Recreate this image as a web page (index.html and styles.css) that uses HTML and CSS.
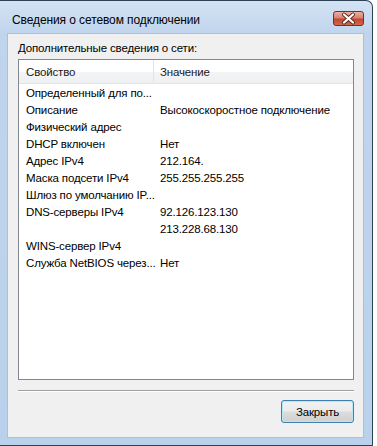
FILE: index.html
```html
<!DOCTYPE html>
<html>
	<head>
		<meta charset="utf-8">
		<meta name="viewport" content="width=device-width, initial-scale=1">
		<title>Сведения о сетевом подключении</title>
		<link rel="stylesheet" href="styles.css">
	</head>
	<body>
	<!--Окно-->
		<div class="window">
		<!--Заголовок окна-->
			<div class="titlebar">
				<span class="title">Сведения о сетевом подключении</span>
				<button class="close" title="Закрыть">
					<svg width="31" height="15" viewBox="0 0 31 15">
						<path d="M11 3.5 L20 11.5 M20 3.5 L11 11.5" stroke="#5a2a22" stroke-width="4" stroke-linecap="round"/>
						<path d="M11 3.5 L20 11.5 M20 3.5 L11 11.5" stroke="#fff" stroke-width="2.2" stroke-linecap="round"/>
					</svg>
				</button>
			</div>
		<!--Содержимое-->
			<div class="content">
				<div class="caption">Дополнительные сведения о сети:</div>
				<div class="list">
					<div class="list-head">
						<div class="hcell">Свойство</div>
						<div class="hcell">Значение</div>
					</div>
					<div class="rows">
						<div class="cell">Определенный для по...</div><div class="cell"></div>
						<div class="cell">Описание</div><div class="cell">Высокоскоростное подключение</div>
						<div class="cell">Физический адрес</div><div class="cell"></div>
						<div class="cell">DHCP включен</div><div class="cell">Нет</div>
						<div class="cell">Адрес IPv4</div><div class="cell">212.164.</div>
						<div class="cell">Маска подсети IPv4</div><div class="cell">255.255.255.255</div>
						<div class="cell">Шлюз по умолчанию IP...</div><div class="cell"></div>
						<div class="cell">DNS-серверы IPv4</div><div class="cell">92.126.123.130</div>
						<div class="cell"></div><div class="cell">213.228.68.130</div>
						<div class="cell">WINS-сервер IPv4</div><div class="cell"></div>
						<div class="cell">Служба NetBIOS через...</div><div class="cell">Нет</div>
					</div>
				</div>
				<div class="sep"></div>
			<!--Кнопки-->
				<div class="actions">
					<button class="btn">Закрыть</button>
				</div>
			</div>
		</div>
	</body>
</html>
```

FILE: styles.css
```css
			body {
				margin: 0;
				background: #fff;
				font-family: "Liberation Sans", Arial, sans-serif;
				font-size: 11.5px;
				letter-spacing: -0.15px;
				color: #000;
			}
		/* Рамка окна */
			.window {
				width: 373px;
				border: 1px solid #2d4257;
				border-left: none;
				border-radius: 0 7px 0 0;
				background: linear-gradient(180deg, #d3e3f4 0, #c0d5ed 32px, #b9d1ea 100%);
				padding: 0 8px 7px 7px;
				box-sizing: border-box;
			}
			.titlebar {
				height: 32px;
				display: flex;
				justify-content: space-between;
				align-items: flex-start;
			}
			.title {
				margin: 11px 0 0 5px;
				line-height: 16px;
				font-size: 12px;
				letter-spacing: -0.1px;
			}
			.close {
				margin: 10px 0 0 0;
				padding: 0;
				width: 31px;
				height: 15px;
				border: 1px solid #7e2c20;
				border-radius: 3px;
				background: linear-gradient(180deg, #eab1a5 0%, #d98170 45%, #c4452f 55%, #d0684f 100%);
				display: flex;
				align-items: center;
				justify-content: center;
				box-sizing: border-box;
			}
			.close svg {
				flex: none;
			}
		/* Серая область */
			.content {
				background: #f0f0f0;
				border: 1px solid #a9c1dc;
				padding: 7px 9px 14px 10px;
				display: flex;
				flex-direction: column;
			}
			.caption {
				line-height: 15px;
				margin-bottom: 3px;
			}
		/* Список свойств */
			.list {
				height: 321px;
				border: 1px solid #828790;
				background: #fff;
				box-sizing: border-box;
			}
			.list-head {
				display: grid;
				grid-template-columns: 134px 1fr;
				height: 24px;
				background: linear-gradient(180deg, #fff 0, #fff 50%, #f3f4f6 51%, #eff0f2 100%);
				border-bottom: 1px solid #e3e5e8;
				box-sizing: border-box;
			}
			.hcell {
				padding: 5px 0 0 7px;
				line-height: 15px;
				color: #1a1a1a;
			}
			.hcell + .hcell {
				border-left: 1px solid #e2e3ea;
				padding-left: 6px;
			}
			.rows {
				display: grid;
				grid-template-columns: 134px 1fr;
				padding-top: 1px;
			}
			.cell {
				padding-left: 7px;
				line-height: 17px;
				height: 17px;
				white-space: nowrap;
			}
			.sep {
				height: 1px;
				margin-top: 10px;
				background: #a0a0a0;
				border-bottom: 1px solid #fff;
			}
			.actions {
				display: flex;
				justify-content: flex-end;
				margin-top: 8px;
			}
			.btn {
				width: 73px;
				height: 23px;
				padding: 0;
				font-family: "Liberation Sans", Arial, sans-serif;
				font-size: 11.5px;
				letter-spacing: -0.15px;
				color: #000;
				border: 1px solid #3c7fb1;
				border-radius: 3px;
				background: linear-gradient(180deg, #f2f2f2 0%, #ebebeb 48%, #dddddd 52%, #cfcfcf 100%);
				box-shadow: inset 0 0 0 1px #b9e6fb;
			}
```
